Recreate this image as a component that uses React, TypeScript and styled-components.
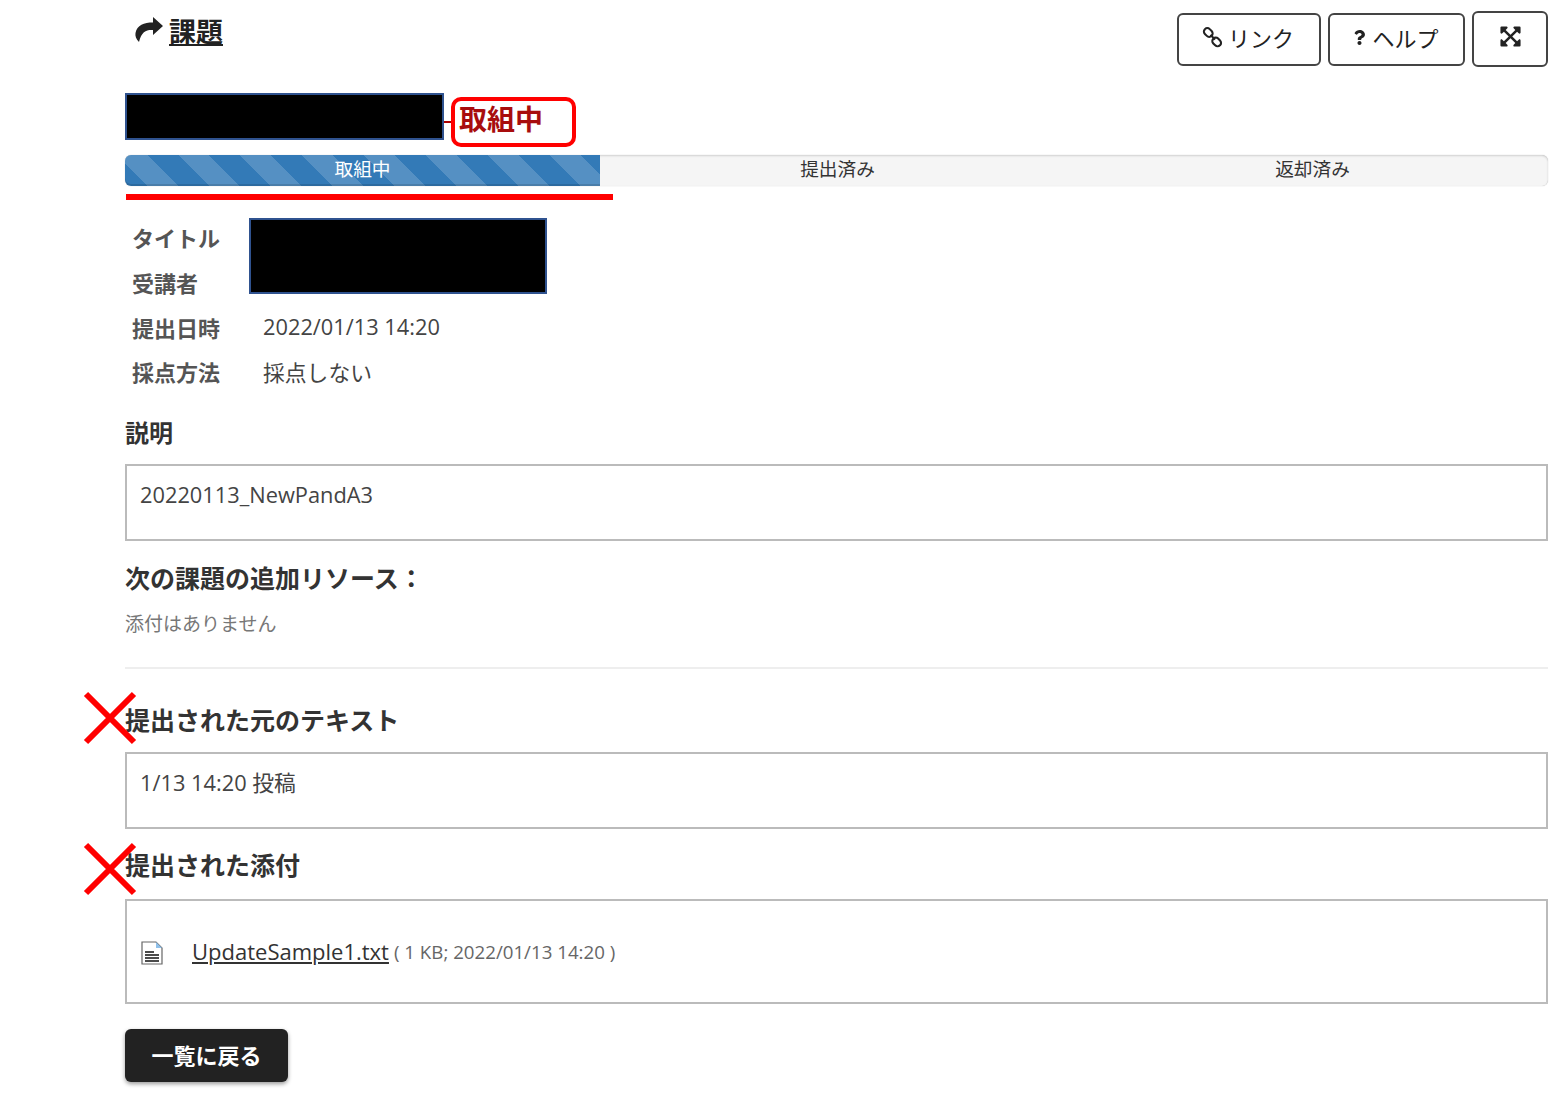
import * as React from 'react'
import styled, { createGlobalStyle } from 'styled-components'
import { FaQuestion, FaExpandArrowsAlt } from 'react-icons/fa'

const App = () => {
  return (
    <Page>
      <GlobalStyle />
      <Header>
        <ToolTitle>
          <ShareIcon />
          <ToolName>課題</ToolName>
        </ToolTitle>
        <Toolbar>
          <ToolButton $width={144}>
            <LinkIcon />
            リンク
          </ToolButton>
          <ToolButton $width={137}>
            <FaQuestion size={15} />
            ヘルプ
          </ToolButton>
          <ExpandButton>
            <FaExpandArrowsAlt size={23} />
          </ExpandButton>
        </Toolbar>
      </Header>

      <StatusRow>
        <TitleRedaction />
        <Connector />
        <StatusCallout>取組中</StatusCallout>
      </StatusRow>

      <Progress>
        <ProgressBar>取組中</ProgressBar>
        <ProgressStep>提出済み</ProgressStep>
        <ProgressStep>返却済み</ProgressStep>
        <ProgressUnderline />
      </Progress>

      <MetaGrid>
        <MetaLabel>タイトル</MetaLabel>
        <MetaRedaction />
        <MetaLabel>受講者</MetaLabel>
        <MetaLabel>提出日時</MetaLabel>
        <MetaValue>2022/01/13 14:20</MetaValue>
        <MetaLabel>採点方法</MetaLabel>
        <MetaValue>採点しない</MetaValue>
      </MetaGrid>

      <SmallHeading>説明</SmallHeading>
      <TextBox>20220113_NewPandA3</TextBox>

      <ResourceHeading>次の課題の追加リソース：</ResourceHeading>
      <Muted>添付はありません</Muted>
      <Divider />

      <SubmitHeading $top={34} $gap={15}>
        <Cross $top={-12} />
        提出された元のテキスト
      </SubmitHeading>
      <TextBox>1/13 14:20 投稿</TextBox>

      <SubmitHeading $top={19} $gap={17}>
        <Cross $top={-6} />
        提出された添付
      </SubmitHeading>
      <AttachmentBox>
        <FileIcon />
        <FileLink href="#">UpdateSample1.txt</FileLink>
        <FileInfo>( 1 KB; 2022/01/13 14:20 )</FileInfo>
      </AttachmentBox>

      <BackButton>一覧に戻る</BackButton>
    </Page>
  )
}

export default App

const ShareIcon = () => (
  <ShareSvg viewBox="0 0 28 25">
    <path d="M18 0l10 9-10 9v-5C12 12.5 6.5 14 4 25 1 22 0 19 .5 16 2 8 9 5.5 18 5.5z" fill="#222" />
  </ShareSvg>
)

const LinkIcon = () => (
  <LinkSvg viewBox="0 0 20 20">
    <g fill="none" stroke="#222" strokeWidth="2">
      <rect x="1.5" y="2" width="9" height="6.5" rx="3.2" transform="rotate(45 6 5.2)" />
      <rect x="9.5" y="11" width="9" height="6.5" rx="3.2" transform="rotate(45 14 14.2)" />
      <path d="M8 7.5l4.5 4.5" />
    </g>
  </LinkSvg>
)

const FileIcon = () => (
  <FileSvg viewBox="0 0 22 24">
    <path d="M1 1h14l6 6v16H1z" fill="#fff" stroke="#666" strokeWidth="1.2" />
    <path d="M15 1l6 6h-6z" fill="#8fc0ea" />
    <path d="M4 11h9M4 14h14M4 17h14M4 20h14" stroke="#111" strokeWidth="1.7" />
  </FileSvg>
)

const Cross = ({ $top }: { $top: number }) => (
  <CrossSvg $top={$top} viewBox="0 0 54 54">
    <path d="M3 3l48 48M51 3L3 51" stroke="#f00" strokeWidth="6" />
  </CrossSvg>
)

const GlobalStyle = createGlobalStyle`
  html, body {
    margin: 0;
    background: #fff;
  }
  body {
    font-family: "Open Sans", "Noto Sans CJK JP", sans-serif;
    color: #333;
  }
`

const Page = styled.div`
  box-sizing: border-box;
  width: 1567px;
  height: 1099px;
  padding: 11px 19px 0 125px;
  overflow: hidden;
`

const Header = styled.div`
  display: flex;
  justify-content: space-between;
  align-items: flex-start;
  height: 56px;
`

const ToolTitle = styled.div`
  display: flex;
  align-items: center;
  gap: 6px;
  margin: 3px 0 0 10px;
  color: #222;
`

const ShareSvg = styled.svg`
  width: 28px;
  height: 25px;
  margin-top: -5px;
`

const ToolName = styled.span`
  font-size: 27px;
  line-height: 36px;
  font-weight: 700;
  text-decoration: underline;
  text-underline-offset: 2px;
`

const Toolbar = styled.div`
  display: flex;
  align-items: center;
  gap: 7px;
`

const ToolButton = styled.div<{ $width: number }>`
  box-sizing: border-box;
  width: ${(p) => p.$width}px;
  height: 53px;
  display: flex;
  align-items: center;
  justify-content: center;
  gap: 5px;
  border: 2px solid #444;
  border-radius: 6px;
  font-size: 22px;
  color: #222;
  padding: 0 2px 4px 0;
`

const ExpandButton = styled.div`
  box-sizing: border-box;
  width: 76px;
  height: 56px;
  display: flex;
  align-items: center;
  justify-content: center;
  border: 2px solid #444;
  border-radius: 6px;
  color: #222;
  padding-bottom: 6px;
`

const LinkSvg = styled.svg`
  width: 21px;
  height: 21px;
`

const StatusRow = styled.div`
  display: flex;
  align-items: flex-start;
  height: 62px;
  margin-top: 26px;
`

const TitleRedaction = styled.div`
  box-sizing: border-box;
  width: 319px;
  height: 47px;
  background: #000;
  border: 2px solid #2f528f;
`

const Connector = styled.div`
  width: 7px;
  height: 2px;
  margin-top: 28px;
  background: #a00;
`

const StatusCallout = styled.div`
  box-sizing: border-box;
  width: 125px;
  height: 50px;
  margin-top: 4px;
  padding-left: 4px;
  border: 4px solid #f00;
  border-radius: 10px;
  color: #a80d0d;
  font-size: 28px;
  line-height: 36px;
  font-weight: 700;
`

const Progress = styled.div`
  position: relative;
  display: flex;
  height: 31px;
  background: #f5f5f5;
  border-radius: 6px;
  box-shadow: inset 0 1px 2px rgba(0, 0, 0, 0.15), 0 0 1px rgba(0, 0, 0, 0.3);
`

const ProgressStep = styled.div`
  width: 475px;
  flex: none;
  text-align: center;
  font-size: 18.7px;
  line-height: 28px;
  color: #333;
`

const ProgressBar = styled(ProgressStep)`
  color: #fff;
  border-radius: 6px 0 0 6px;
  background-color: #337ab7;
  background-image: repeating-linear-gradient(
    45deg,
    transparent 0,
    transparent 15.6px,
    rgba(255, 255, 255, 0.17) 15.6px,
    rgba(255, 255, 255, 0.17) 37.5px,
    transparent 37.5px,
    transparent 43.8px
  );
  box-shadow: inset 0 -2px 0 rgba(0, 0, 0, 0.13);
`

const ProgressUnderline = styled.div`
  position: absolute;
  left: 1px;
  top: 39px;
  width: 487px;
  height: 6px;
  background: #f00;
`

const MetaGrid = styled.div`
  display: grid;
  grid-template-columns: 131px 1fr;
  grid-auto-rows: 44.7px;
  align-items: center;
  margin-top: 29px;
  padding-left: 7px;
  font-size: 22px;
`

const MetaLabel = styled.div`
  grid-column: 1;
  font-weight: 600;
  color: #555;
`

const MetaValue = styled.div`
  grid-column: 2;
  color: #444;
  font-size: 21.8px;
`

const MetaRedaction = styled.div`
  grid-column: 2;
  grid-row: 1 / span 2;
  align-self: start;
  box-sizing: border-box;
  width: 298px;
  height: 76px;
  margin: 3px 0 0 -14px;
  background: #000;
  border: 2px solid #2f528f;
`

const SmallHeading = styled.h4`
  margin: 23px 0 0;
  font-size: 24px;
  line-height: 32px;
  font-weight: 700;
  color: #333;
`

const TextBox = styled.div`
  box-sizing: border-box;
  height: 77px;
  margin-top: 15px;
  padding: 14px 13px 0;
  border: 2px solid #bbb;
  font-size: 21.8px;
  line-height: 30px;
  color: #444;
`

const ResourceHeading = styled.h4`
  margin: 20px 0 0;
  font-size: 25px;
  line-height: 34px;
  font-weight: 700;
  color: #333;
`

const Muted = styled.div`
  margin-top: 15px;
  font-size: 19px;
  line-height: 28px;
  color: #777;
`

const Divider = styled.div`
  height: 2px;
  margin-top: 29px;
  background: #eee;
`

const SubmitHeading = styled.h4<{ $top: number; $gap: number }>`
  position: relative;
  margin: ${(p) => p.$top}px 0 ${(p) => p.$gap}px;
  font-size: 25px;
  line-height: 34px;
  font-weight: 700;
  color: #333;
  & + div {
    margin-top: 0;
  }
`

const CrossSvg = styled.svg<{ $top: number }>`
  position: absolute;
  left: -42px;
  top: ${(p) => p.$top}px;
  width: 54px;
  height: 54px;
`

const AttachmentBox = styled.div`
  box-sizing: border-box;
  display: flex;
  align-items: center;
  height: 105px;
  padding-left: 14px;
  border: 2px solid #bbb;
  color: #777;
`

const FileSvg = styled.svg`
  width: 22px;
  height: 24px;
  margin: 4px 29px 0 0;
`

const FileLink = styled.a`
  font-size: 22px;
  line-height: 30px;
  color: #333;
  text-decoration: underline;
`

const FileInfo = styled.span`
  margin-left: 5px;
  font-size: 18.7px;
  color: #666;
`

const BackButton = styled.div`
  width: 163px;
  height: 53px;
  margin-top: 25px;
  background: #222;
  border-radius: 6px;
  box-shadow: 0 2px 4px rgba(0, 0, 0, 0.4);
  color: #fff;
  font-size: 22px;
  font-weight: 700;
  line-height: 53px;
  text-align: center;
`
